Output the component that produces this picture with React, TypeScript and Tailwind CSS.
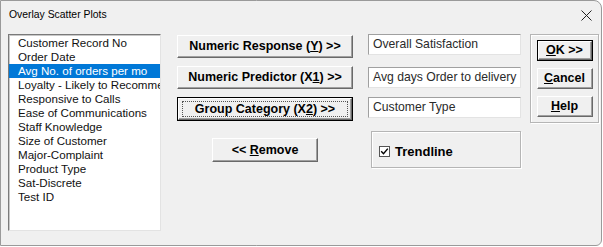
import type { ReactNode } from "react";

const items = [
  "Customer Record No",
  "Order Date",
  "Avg No. of orders per mo",
  "Loyalty - Likely to Recommend",
  "Responsive to Calls",
  "Ease of Communications",
  "Staff Knowledge",
  "Size of Customer",
  "Major-Complaint",
  "Product Type",
  "Sat-Discrete",
  "Test ID",
];

const font = "font-['Liberation_Sans',Arial,sans-serif]";

function Raised({
  children,
  className = "",
  isDefault = false,
  focused = false,
}: {
  children: ReactNode;
  className?: string;
  isDefault?: boolean;
  focused?: boolean;
}) {
  const label = <span className="whitespace-pre">{children}</span>;
  return (
    <button
      type="button"
      className={`${font} text-[12.5px] font-bold text-black ${isDefault ? "border border-black" : ""} ${className}`}
    >
      <div className="flex h-full w-full items-center justify-center border border-t-white border-l-white border-b-[#696969] border-r-[#696969] bg-[#f0f0f0] shadow-[inset_-1px_-1px_0_#a0a0a0]">
        {focused ? (
          <div className="flex h-[calc(100%-4px)] w-[calc(100%-6px)] items-center justify-center border border-dotted border-[#555]">
            {label}
          </div>
        ) : (
          label
        )}
      </div>
    </button>
  );
}

function Field({ value, className = "" }: { value: string; className?: string }) {
  return (
    <div
      className={`flex h-[21px] w-[153px] items-center border border-t-[#a0a0a0] border-l-[#a0a0a0] border-b-[#e3e3e3] border-r-[#e3e3e3] bg-white pl-[4px] text-[12.2px] text-[#2a2a2a] ${className}`}
    >
      {value}
    </div>
  );
}

export default function App() {
  return (
    <div className={`h-[247px] w-[603px] bg-white ${font}`}>
      <div className="flex h-[246px] w-[602px] flex-col rounded-tr-[8px] rounded-br-[6px] border border-[#9a9a9a] bg-[#f0f0f0]">
        <div className="flex h-[28px] items-center justify-between pl-[8px] pr-[8px]">
          <span className="text-[10.4px] text-black">Overlay Scatter Plots</span>
          <svg width="11" height="11" viewBox="0 0 11 11" className="mr-[1px]">
            <path d="M0.5 0.5 L10.5 10.5 M10.5 0.5 L0.5 10.5" stroke="#222" strokeWidth="1" />
          </svg>
        </div>

        <div className="flex pl-[7px] pt-[5px]">
          <div className="h-[197px] w-[153px] overflow-hidden border border-t-[#7a7a7a] border-l-[#7a7a7a] border-b-[#e3e3e3] border-r-[#e3e3e3] bg-white pt-[1px] shadow-[inset_1px_1px_0_#c8c8c8]">
            {items.map((item, i) => (
              <div
                key={item}
                className={`h-[14px] whitespace-nowrap pl-[9px] text-[11.6px] leading-[14px] ${
                  i === 2 ? "bg-[#0078d7] text-white" : "text-[#111]"
                }`}
              >
                {item}
              </div>
            ))}
          </div>

          <div className="ml-[16px] flex w-[176px] flex-col items-center pt-[1px]">
            <Raised className="h-[23px] w-[176px]">
              Numeric Response (<u>Y</u>) &gt;&gt;
            </Raised>
            <Raised className="mt-[8px] h-[23px] w-[176px]">
              Numeric Predictor (X<u>1</u>) &gt;&gt;
            </Raised>
            <Raised className="mt-[8px] h-[24px] w-[176px]" isDefault focused>
              Group Category (X<u>2</u>) &gt;&gt;
            </Raised>
            <Raised className="mt-[17px] h-[24px] w-[106px]">
              {"<< "}
              <u>R</u>emove
            </Raised>
          </div>

          <div className="ml-[15px] flex flex-col">
            <Field value="Overall Satisfaction" />
            <Field value="Avg days Order to delivery" className="mt-[12px]" />
            <Field value="Customer Type" className="mt-[9px]" />
            <div className="ml-[3px] mt-[13px] flex h-[37px] w-[150px] items-center border border-[#b5b5b5] pl-[7px] pt-[4px] shadow-[inset_1px_1px_0_#fff,1px_1px_0_#fff]">
              <div className="flex items-center">
                <span className="flex h-[11px] w-[11px] items-center justify-center border border-[#555] bg-white">
                  <svg width="9" height="9" viewBox="0 0 9 9">
                    <path d="M1.2 4.3 L3.5 6.8 L7.8 1.6" stroke="#000" strokeWidth="1.4" fill="none" />
                  </svg>
                </span>
                <span className="ml-[5px] text-[13px] font-bold text-black">Trendline</span>
              </div>
            </div>
          </div>

          <div className="ml-[9px] flex h-[89px] w-[69px] flex-col items-center border border-[#b5b5b5] pt-[5px] shadow-[inset_1px_1px_0_#fff,1px_1px_0_#fff]">
            <Raised className="h-[21px] w-[56px]" isDefault>
              <u>O</u>K &gt;&gt;
            </Raised>
            <Raised className="mt-[7px] h-[21px] w-[56px]">
              <u>C</u>ancel
            </Raised>
            <Raised className="mt-[7px] h-[21px] w-[56px]">
              <u>H</u>elp
            </Raised>
          </div>
        </div>
      </div>
    </div>
  );
}
